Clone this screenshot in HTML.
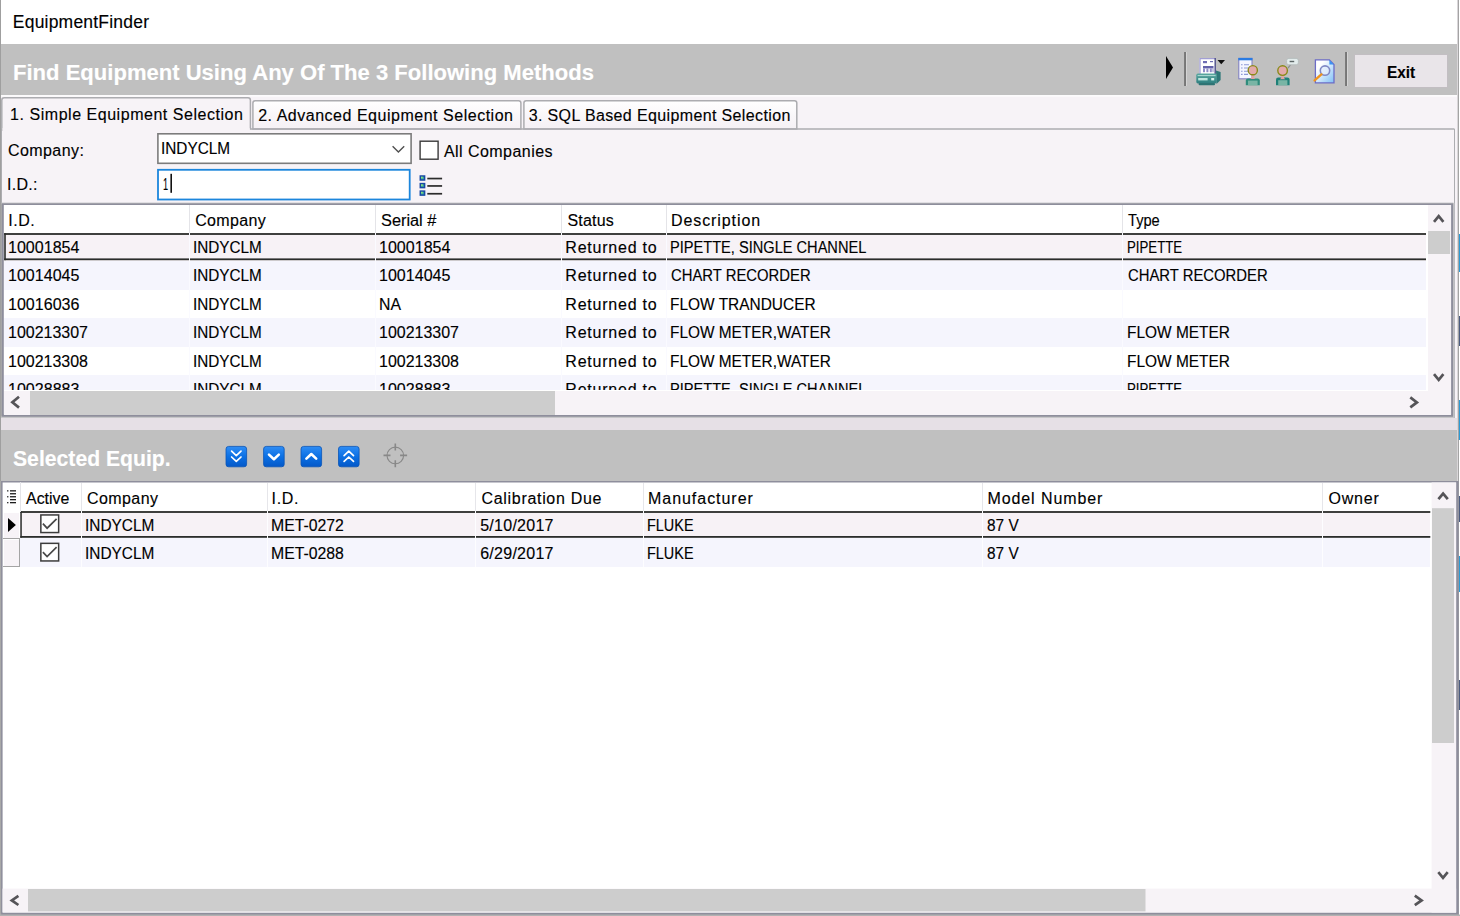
<!DOCTYPE html>
<html lang="en"><head><meta charset="utf-8"><title>EquipmentFinder</title>
<style>
html,body{margin:0;padding:0;}
body{width:1460px;height:916px;position:relative;overflow:hidden;background:#fff;font-family:"Liberation Sans",sans-serif;}
.b{position:absolute;box-sizing:border-box;}
.t{-webkit-text-stroke:0.14px currentColor;position:absolute;white-space:pre;line-height:normal;transform-origin:0 0;font-family:"Liberation Sans",sans-serif;color:#000;}
svg{position:absolute;overflow:visible;}

</style></head>
<body>
<!-- window edges -->
<div class="b" style="left:0;top:0;width:1px;height:916px;background:#9f9f9f"></div>
<div class="b" style="left:1457px;top:0;width:1px;height:916px;background:#d9d6d9"></div><div class="b" style="left:1458px;top:0;width:1px;height:916px;background:#a4a4a4"></div>
<div class="b" style="left:1459px;top:234px;width:1px;height:38px;background:#2a9bd6"></div><div class="b" style="left:1459px;top:316px;width:1px;height:30px;background:#4b5c80"></div><div class="b" style="left:1459px;top:400px;width:1px;height:40px;background:#2a9bd6"></div><div class="b" style="left:1459px;top:496px;width:1px;height:26px;background:#4b5c80"></div><div class="b" style="left:1459px;top:556px;width:1px;height:36px;background:#2a9bd6"></div><div class="b" style="left:1459px;top:680px;width:1px;height:30px;background:#4b5c80"></div>
<!-- top grey bar -->
<div class="b" style="left:1px;top:44px;width:1456px;height:51px;background:#c0c0c0"></div>
<!-- tab strip / page background -->
<div class="b" style="left:1px;top:95px;width:1456px;height:323px;background:#f7f3f7"></div>
<!-- tab page frame -->
<div class="b" style="left:1px;top:129px;width:1454px;height:289px;border:1px solid #adadb1;border-bottom:none;border-top:none;background:#f7f3f7"></div>
<!-- tabs -->
<svg style="left:0;top:90px" width="1460" height="45">
 <defs><linearGradient id="gtab" x1="0" y1="0" x2="0" y2="1"><stop offset="0" stop-color="#ffffff"/><stop offset="0.55" stop-color="#f9f6f9"/><stop offset="1" stop-color="#f5f1f5"/></linearGradient></defs>
 <rect x="1" y="5" width="1456" height="1.8" fill="#fcfbfc"/>
 <g fill="url(#gtab)" stroke="#acacb0" stroke-width="1.5">
  <path d="M252.9 39 V13 Q252.9 10.7 255.2 10.7 H518.6 Q520.9 10.7 520.9 13 V39 Z"/>
  <path d="M523.9 39 V13 Q523.9 10.7 526.2 10.7 H794.5 Q796.8 10.7 796.8 13 V39 Z"/>
 </g>
 <path d="M250 39 H1454.5" stroke="#acacb0" stroke-width="1.4" fill="none"/>
 <path d="M1.8 41 V10.2 Q1.8 7.8 4.2 7.8 H248 Q250.4 7.8 250.4 10.2 V39.6" fill="#f7f3f7" stroke="#acacb0" stroke-width="1.5"/>
 <rect x="2.6" y="38" width="247" height="4" fill="#f7f3f7"/>
</svg>
<!-- toolbar -->
<svg style="left:1166px;top:56px" width="8" height="23"><path d="M0 0 L7 11.5 L0 23 Z" fill="#000"/></svg>
<div class="b" style="left:1184px;top:52px;width:2px;height:34px;background:linear-gradient(90deg,#8a8a8a 0,#6c6c6c 50%,#808080 100%)"></div>
<div class="b" style="left:1186px;top:52px;width:1px;height:34px;background:#d4d4d4"></div>
<div class="b" style="left:1345px;top:52px;width:2px;height:34px;background:linear-gradient(90deg,#8a8a8a 0,#6c6c6c 50%,#808080 100%)"></div>
<div class="b" style="left:1347px;top:52px;width:1px;height:34px;background:#d4d4d4"></div>
<div class="b" style="left:1354px;top:54px;width:94px;height:34px;background:#e9e5e9;border:1px solid #c2bec2"></div>
<!-- combo / checkbox / id input / list icon -->
<svg style="left:0;top:130px" width="500" height="74">
 <rect x="157.9" y="3.8" width="253.2" height="29.5" fill="#fff" stroke="#7c7c7c" stroke-width="1.6"/>
 <path d="M392.6 16.2 L398.4 22 L404.2 16.2" fill="none" stroke="#505050" stroke-width="1.4"/>
 <rect x="420.1" y="11.2" width="18" height="18" fill="#fff" stroke="#3a3a3a" stroke-width="1.4"/>
 <rect x="158" y="39.8" width="251.7" height="29.7" fill="#fff" stroke="#1c86dc" stroke-width="1.8"/>
 <rect x="170.4" y="43.8" width="1.6" height="19" fill="#111"/>
 <g fill="#3fae9c" stroke="#1748a4" stroke-width="1.5"><rect x="420.3" y="46" width="4.3" height="4"/><rect x="420.3" y="53.6" width="4.3" height="4"/><rect x="420.3" y="61.1" width="4.3" height="4"/></g>
 <g fill="#8fe07a"><rect x="421" y="46.7" width="1.7" height="1.6"/><rect x="421" y="54.3" width="1.7" height="1.6"/><rect x="421" y="61.8" width="1.7" height="1.6"/></g>
 <g fill="#2c2c2c"><rect x="427.3" y="47.7" width="14.8" height="1.7"/><rect x="427.3" y="55.1" width="14.8" height="1.7"/><rect x="427.3" y="62.9" width="14.8" height="1.7"/></g>
</svg>
<!-- ===== top grid ===== -->
<svg style="left:0;top:0" width="1460" height="430">
 <rect x="1" y="202.8" width="1453.6" height="215.4" fill="#c6c6c8"/>
 <rect x="1" y="202.8" width="1452" height="213.6" fill="#b6b6bc"/>
 <rect x="1" y="203.6" width="1452" height="212.8" fill="#a9a9a9"/>
 <rect x="1.9" y="203.6" width="1451.2" height="213" fill="#8e8e9c"/>
 <rect x="3.8" y="205" width="1447.3" height="209.5" fill="#fff"/>
</svg>
<!-- rows -->
<div class="b" style="left:4px;top:233px;width:1422px;height:28px;background:#f7f2f6"></div>
<div class="b" style="left:4px;top:261px;width:1422px;height:29px;background:#f5f5fd"></div>
<div class="b" style="left:4px;top:318px;width:1422px;height:29px;background:#f5f5fd"></div>
<div class="b" style="left:4px;top:375px;width:1422px;height:14.5px;background:#f5f5fd"></div>
<!-- selected row outline -->
<svg style="left:0;top:0" width="1460" height="300"><g fill="#2b2d2b"><rect x="4.2" y="233.1" width="1421.8" height="1.8"/><rect x="4.2" y="258.4" width="1421.8" height="1.8"/><rect x="4.2" y="233.1" width="1.6" height="27.1"/></g></svg>
<!-- col separators -->
<div class="b" style="left:189px;top:205px;width:1px;height:28px;background:#e4e4e8"></div><div class="b" style="left:189px;top:233px;width:1px;height:157px;background:#fafaff"></div>
<div class="b" style="left:375px;top:205px;width:1px;height:28px;background:#e4e4e8"></div><div class="b" style="left:375px;top:233px;width:1px;height:157px;background:#fafaff"></div>
<div class="b" style="left:561px;top:205px;width:1px;height:28px;background:#e4e4e8"></div><div class="b" style="left:561px;top:233px;width:1px;height:157px;background:#fafaff"></div>
<div class="b" style="left:666px;top:205px;width:1px;height:28px;background:#e4e4e8"></div><div class="b" style="left:666px;top:233px;width:1px;height:157px;background:#fafaff"></div>
<div class="b" style="left:1122px;top:205px;width:1px;height:28px;background:#e4e4e8"></div><div class="b" style="left:1122px;top:233px;width:1px;height:157px;background:#fafaff"></div>
<!-- scrollbars -->
<div class="b" style="left:4px;top:389.5px;width:1424px;height:2px;background:#fff;z-index:3"></div>
<div class="b" style="left:4px;top:391px;width:1447px;height:23.5px;background:#f7f3f7;z-index:3"></div>
<div class="b" style="left:1428px;top:205px;width:23px;height:209.5px;background:#f7f3f7"></div>
<div class="b" style="left:30px;top:391px;width:525px;height:23.5px;background:#cdcdcd;z-index:4"></div>
<div class="b" style="left:1428px;top:231px;width:22px;height:23px;background:#cdcdcd"></div>
<!-- strip + second grey bar -->
<div class="b" style="left:1px;top:418px;width:1456px;height:12px;background:#e6e0e6"></div>
<div class="b" style="left:1px;top:430px;width:1456px;height:51px;background:#c0c0c0"></div>
<!-- ===== bottom grid ===== -->
<svg style="left:0;top:480px" width="1460" height="436">
 <rect x="0" y="1" width="1458.6" height="435" fill="#8e8e9c"/>
 <rect x="0" y="1" width="1.1" height="435" fill="#a8a8a8"/>
 <rect x="0" y="434.5" width="1460" height="1.5" fill="#b2b2b2"/>
 <rect x="2.6" y="2.5" width="1453.5" height="430" fill="#fff"/>
</svg>
<div class="b" style="left:20px;top:511px;width:1410px;height:27px;background:#f7f2f6"></div>
<div class="b" style="left:20px;top:538px;width:1410px;height:29px;background:#f5f5fd"></div>
<!-- row header cells -->
<div class="b" style="left:4px;top:513px;width:15px;height:25px;background:#f7f3f7"></div>
<div class="b" style="left:3px;top:538px;width:17px;height:1px;background:#a4a4a4"></div>
<div class="b" style="left:4px;top:540px;width:15px;height:26px;background:#f7f3f7"></div>
<div class="b" style="left:19px;top:538px;width:1px;height:29px;background:#a4a4a4"></div>
<div class="b" style="left:3px;top:566px;width:17px;height:1px;background:#a4a4a4"></div>
<svg style="left:8.3px;top:518px" width="9" height="15"><path d="M0 0 L7.9 7 L0 14 Z" fill="#000"/></svg>
<!-- selected outline -->
<svg style="left:0;top:480px" width="1460" height="100"><g fill="#2b2d2b"><rect x="20.3" y="31.1" width="1410" height="1.8"/><rect x="20.3" y="56" width="1410" height="1.8"/><rect x="20.3" y="31.1" width="1.5" height="26.7"/></g></svg>
<!-- col separators -->
<div class="b" style="left:20px;top:482px;width:1px;height:30px;background:#e4e4e8"></div>
<div class="b" style="left:81px;top:483px;width:1px;height:28px;background:#e6e6ea"></div><div class="b" style="left:81px;top:511px;width:1px;height:56px;background:#fdfdff"></div>
<div class="b" style="left:267px;top:483px;width:1px;height:28px;background:#e6e6ea"></div><div class="b" style="left:267px;top:511px;width:1px;height:56px;background:#fdfdff"></div>
<div class="b" style="left:475px;top:483px;width:1px;height:28px;background:#e6e6ea"></div><div class="b" style="left:475px;top:511px;width:1px;height:56px;background:#fdfdff"></div>
<div class="b" style="left:643px;top:483px;width:1px;height:28px;background:#e6e6ea"></div><div class="b" style="left:643px;top:511px;width:1px;height:56px;background:#fdfdff"></div>
<div class="b" style="left:982px;top:483px;width:1px;height:28px;background:#e6e6ea"></div><div class="b" style="left:982px;top:511px;width:1px;height:56px;background:#fdfdff"></div>
<div class="b" style="left:1322px;top:483px;width:1px;height:28px;background:#e6e6ea"></div><div class="b" style="left:1322px;top:511px;width:1px;height:56px;background:#fdfdff"></div>
<!-- header menu glyph -->
<svg style="left:0;top:480px" width="30" height="30"><g fill="#1c1c1c"><rect x="10" y="10.2" width="6" height="1.3"/><rect x="10" y="13.1" width="6" height="1.3"/><rect x="10" y="16.1" width="6" height="1.3"/><rect x="10" y="19" width="6" height="1.3"/><rect x="10" y="22" width="6" height="1.3"/><rect x="7.1" y="10.2" width="1.3" height="1.3"/><rect x="7.1" y="16.1" width="1.3" height="1.3"/><rect x="7.1" y="22" width="1.3" height="1.3"/></g></svg>
<!-- checkboxes -->
<svg style="left:40px;top:514px" width="20" height="50"><g fill="#fff" stroke="#3c3c3c" stroke-width="1.5"><rect x="0.85" y="0.95" width="17.8" height="17.6"/><rect x="0.85" y="29.35" width="17.8" height="17.6"/></g><g fill="none" stroke="#484848" stroke-width="1.7"><path d="M2.9 9.7 L7.1 14.2 L16.6 4.8"/><path d="M2.9 38.1 L7.1 42.6 L16.6 33.2"/></g></svg>
<!-- scrollbars -->
<svg style="left:0;top:480px" width="1460" height="436"><rect x="1431.6" y="2.5" width="24.5" height="430" fill="#f7f3f7"/><rect x="2.6" y="408.6" width="1453.5" height="23.9" fill="#f7f3f7"/><rect x="1432" y="28.2" width="22" height="234.8" fill="#cdcdcd"/><rect x="28" y="409" width="1117.5" height="22.4" fill="#cdcdcd"/></svg>
<svg style="left:0;top:0;z-index:5" width="1460" height="916">
 <g fill="none" stroke="#555458" stroke-width="2.7" stroke-linejoin="miter">
  <path d="M19 396.8 L12.4 402.2 L19 407.6"/>
  <path d="M1410.3 397.4 L1416.9 402.4 L1410.3 407.4"/>
  <path d="M1434 221.8 L1438.7 216.2 L1443.4 221.8"/>
  <path d="M1434 374.2 L1438.7 379.8 L1443.4 374.2"/>
  <path d="M18.4 895.8 L11.8 900.4 L18.4 905"/>
  <path d="M1414.8 895.6 L1421.6 900.4 L1414.8 905.2"/>
  <path d="M1438.4 499.2 L1443.1 493.6 L1447.8 499.2"/>
  <path d="M1438.3 872.2 L1443 877.8 L1447.7 872.2"/>
 </g>
</svg>
<!-- ===== toolbar icons ===== -->
<svg style="left:0;top:0;z-index:6" width="1460" height="100">
 <defs>
  <linearGradient id="gdoc" x1="0" y1="0" x2="1" y2="1"><stop offset="0.25" stop-color="#ffffff"/><stop offset="1" stop-color="#7fc0f6"/></linearGradient>
  <linearGradient id="gteal" x1="0" y1="0" x2="0" y2="1"><stop offset="0" stop-color="#5aa8a0"/><stop offset="1" stop-color="#2f7f80"/></linearGradient>
 </defs>
 <!-- printer -->
 <g>
  <rect x="1199.4" y="58" width="16.4" height="16" fill="#fff"/>
  <path d="M1200 74V58.6H1215" fill="none" stroke="#a29fd4" stroke-width="1.3"/>
  <path d="M1215.2 58V74" fill="none" stroke="#4a4a86" stroke-width="1.4"/>
  <rect x="1203" y="61" width="4" height="2.2" fill="#6f6db4"/><rect x="1210" y="61" width="3" height="1.2" fill="#6f6db4"/>
  <rect x="1203" y="66" width="10.5" height="2.4" fill="#6361aa"/>
  <rect x="1203" y="68.4" width="2" height="3.8" fill="#8f8dc8"/><rect x="1206.4" y="68.4" width="2" height="3.8" fill="#8f8dc8"/><rect x="1209.8" y="68.4" width="2" height="3.8" fill="#8f8dc8"/><rect x="1212.5" y="68.4" width="1" height="3.8" fill="#8f8dc8"/>
  <path d="M1216 70.5 L1220.6 72 L1220.6 80 L1216.5 84 Z" fill="#2f7878"/>
  <rect x="1196.3" y="73.6" width="20.4" height="9.8" rx="1.6" fill="url(#gteal)"/>
  <rect x="1198.6" y="83" width="16.4" height="2.2" rx="1" fill="#2f7474"/>
  <rect x="1197.6" y="75" width="18" height="1.1" fill="#a8d6cf"/>
  <rect x="1198.2" y="78" width="9.4" height="2.4" fill="#bfe6df"/><rect x="1211.2" y="78" width="3" height="2.4" fill="#d6f2ec"/>
  <path d="M1217.5 59.9 H1225 L1221.25 64.2 Z" fill="#111"/>
 </g>
 <!-- list + person -->
 <g>
  <rect x="1238.8" y="58.4" width="13.2" height="20.4" fill="#f4f6ff" stroke="#7d7dc0" stroke-width="1"/>
  <rect x="1238.3" y="57.9" width="14.2" height="2.4" fill="#2a7be2"/>
  <g stroke="#8c9ad6" stroke-width="1.1"><path d="M1241 64.8h1.6M1244 64.8h5M1241 68h1.6M1244 68h5M1241 71.2h1.6M1244 71.2h4M1241 74.4h1.6M1244 74.4h4"/></g>
  <path d="M1245.8 85.2 V80.4 Q1245.8 78.4 1248 78.4 H1257.6 Q1259.8 78.4 1259.8 80.4 V85.2 Z" fill="#2f8c7c"/>
  <path d="M1248 85.2 V80.6 H1257.6 V85.2 Z" fill="#79b5a5"/>
  <path d="M1251.4 74.5 h2.8 v3.6 l1.2 1 h-5.2 l1.2 -1 Z" fill="#e0a4a4"/>
  <circle cx="1252.8" cy="70.2" r="4.6" fill="#e3aaaa" stroke="#8a8a18" stroke-width="1.4"/>
 </g>
 <!-- person + bubble -->
 <g>
  <path d="M1276 85.2 V79.4 Q1276 77.4 1278.2 77.4 H1287.4 Q1289.6 77.4 1289.6 79.4 V85.2 Z" fill="#1f8078"/>
  <path d="M1278.2 85.2 V80.2 H1287.4 V85.2 Z" fill="#79b5a5"/>
  <path d="M1281.2 75 h2.8 v3 l1.4 1.2 h-5.6 l1.4 -1.2 Z" fill="#e0a4a4"/>
  <circle cx="1282.6" cy="70.6" r="4.8" fill="#e3aaaa" stroke="#8a8a18" stroke-width="1.4"/>
  <path d="M1288 68.2 L1290.6 64.6" stroke="#8a9090" stroke-width="1.2"/>
  <rect x="1286.6" y="58.4" width="11.8" height="6.4" rx="2.2" fill="#e3ecec" stroke="#b4bcbc" stroke-width="0.9"/>
  <rect x="1289.6" y="60.8" width="4.6" height="1.4" fill="#5c6666"/>
 </g>
 <!-- doc + magnifier -->
 <g>
  <path d="M1315.4 59.9 H1329.4 L1334 64.6 V82.9 H1315.4 Z" fill="url(#gdoc)" stroke="#6c6cc6" stroke-width="1.3"/>
  <path d="M1329.4 59.9 L1334 64.6 H1329.4 Z" fill="#3c92f2"/>
  <circle cx="1325" cy="70.6" r="4.7" fill="#e4eefc" fill-opacity="0.8" stroke="#8088c4" stroke-width="1.6"/>
  <path d="M1321.4 74.4 L1314.6 80.4" stroke="#f0941e" stroke-width="2.4" stroke-linecap="round"/>
 </g>
</svg>
<!-- blue arrow buttons + crosshair -->
<svg style="left:0;top:430px;z-index:6" width="1460" height="51">
 <defs><linearGradient id="gb" x1="0" y1="0" x2="0" y2="1"><stop offset="0" stop-color="#2f8df5"/><stop offset="0.5" stop-color="#0b70e4"/><stop offset="1" stop-color="#0458c8"/></linearGradient></defs>
 <g fill="url(#gb)" stroke="#0a55b8" stroke-width="0.8">
  <rect x="226" y="16.4" width="20.6" height="20.4" rx="2.6"/><rect x="263.6" y="16.4" width="20.6" height="20.4" rx="2.6"/>
  <rect x="301" y="16.4" width="20.6" height="20.4" rx="2.6"/><rect x="338.5" y="16.4" width="20.6" height="20.4" rx="2.6"/>
 </g>
 <g fill="none" stroke="#fff" stroke-width="2" stroke-linecap="round" stroke-linejoin="round">
  <path d="M231.6 21.2 L236.3 25.6 L241 21.2 M231.6 27 L236.3 31.4 L241 27" stroke-width="1.7"/>
  <path d="M269 24.6 L273.9 29.2 L278.8 24.6" stroke-width="2.6"/>
  <path d="M306.4 28.6 L311.3 24 L316.2 28.6" stroke-width="2.6"/>
  <path d="M344.1 25.6 L348.8 21.2 L353.5 25.6 M344.1 31.4 L348.8 27 L353.5 31.4" stroke-width="1.7"/>
 </g>
 <g fill="none" stroke="#888" stroke-width="1.1">
  <circle cx="395.3" cy="25.4" r="8.3"/>
  <path d="M395.3 13.6 V20.6 M395.3 30.2 V37.2 M383.5 25.4 H390.5 M400.1 25.4 H407.1" stroke-width="1.6"/>
 </g>
</svg>

<span class="t" style="left:12.80px;top:12.00px;font-size:17.5px;transform:scaleX(1.0000);letter-spacing:0.212px;">EquipmentFinder</span>
<span class="t" style="left:13.00px;top:60.00px;font-size:22px;transform:scaleX(1.0021);font-weight:700;color:#fff;">Find Equipment Using Any Of The 3 Following Methods</span>
<span class="t" style="left:1387.10px;top:63.00px;font-size:17px;transform:scaleX(0.9044);font-weight:700;">Exit</span>
<span class="t" style="left:10.10px;top:106.00px;font-size:16px;transform:scaleX(1.0000);letter-spacing:0.532px;">1. Simple Equipment Selection</span>
<span class="t" style="left:258.20px;top:107.00px;font-size:16px;transform:scaleX(1.0000);letter-spacing:0.518px;">2. Advanced Equipment Selection</span>
<span class="t" style="left:528.70px;top:107.00px;font-size:16px;transform:scaleX(1.0000);letter-spacing:0.367px;">3. SQL Based Equipment Selection</span>
<span class="t" style="left:8.00px;top:142.00px;font-size:16px;transform:scaleX(1.0000);letter-spacing:0.418px;">Company:</span>
<span class="t" style="left:161.24px;top:140.00px;font-size:16px;transform:scaleX(0.9593);">INDYCLM</span>
<span class="t" style="left:444.00px;top:143.00px;font-size:16px;transform:scaleX(1.0000);letter-spacing:0.445px;">All Companies</span>
<span class="t" style="left:7.00px;top:176.00px;font-size:16px;transform:scaleX(1.0000);letter-spacing:0.277px;">I.D.:</span>
<span class="t" style="left:163.03px;top:176.00px;font-size:16px;transform:scaleX(0.5750);">1</span>
<span class="t" style="left:12.90px;top:446.00px;font-size:22px;transform:scaleX(0.9625);font-weight:700;color:#fff;">Selected Equip.</span>
<span class="t" style="left:8.30px;top:212.00px;font-size:16px;transform:scaleX(1.0000);letter-spacing:0.485px;">I.D.</span>
<span class="t" style="left:195.20px;top:212.00px;font-size:16px;transform:scaleX(1.0000);letter-spacing:0.354px;">Company</span>
<span class="t" style="left:381.20px;top:212.00px;font-size:16px;transform:scaleX(1.0193);">Serial #</span>
<span class="t" style="left:567.40px;top:212.00px;font-size:16px;transform:scaleX(1.0000);letter-spacing:0.208px;">Status</span>
<span class="t" style="left:671.00px;top:212.00px;font-size:16px;transform:scaleX(1.0000);letter-spacing:0.907px;">Description</span>
<span class="t" style="left:1128.00px;top:212.00px;font-size:16px;transform:scaleX(0.9141);">Type</span>
<span class="t" style="left:7.50px;top:239.00px;font-size:16px;transform:scaleX(1.0030);">10001854</span>
<span class="t" style="left:193.04px;top:239.00px;font-size:16px;transform:scaleX(0.9550);">INDYCLM</span>
<span class="t" style="left:379.20px;top:239.00px;font-size:16px;transform:scaleX(1.0030);">10001854</span>
<span class="t" style="left:565.30px;top:239.00px;font-size:16px;transform:scaleX(1.0000);letter-spacing:0.779px;">Returned to</span>
<span class="t" style="left:670.09px;top:239.00px;font-size:16px;transform:scaleX(0.9124);">PIPETTE, SINGLE CHANNEL</span>
<span class="t" style="left:1126.77px;top:239.00px;font-size:16px;transform:scaleX(0.8276);">PIPETTE</span>
<span class="t" style="left:7.50px;top:267.00px;font-size:16px;transform:scaleX(1.0030);">10014045</span>
<span class="t" style="left:193.04px;top:267.00px;font-size:16px;transform:scaleX(0.9550);">INDYCLM</span>
<span class="t" style="left:379.20px;top:267.00px;font-size:16px;transform:scaleX(1.0030);">10014045</span>
<span class="t" style="left:565.30px;top:267.00px;font-size:16px;transform:scaleX(1.0000);letter-spacing:0.779px;">Returned to</span>
<span class="t" style="left:671.00px;top:267.00px;font-size:16px;transform:scaleX(0.9276);">CHART RECORDER</span>
<span class="t" style="left:1127.60px;top:267.00px;font-size:16px;transform:scaleX(0.9276);">CHART RECORDER</span>
<span class="t" style="left:7.50px;top:296.00px;font-size:16px;transform:scaleX(1.0030);">10016036</span>
<span class="t" style="left:193.04px;top:296.00px;font-size:16px;transform:scaleX(0.9550);">INDYCLM</span>
<span class="t" style="left:379.01px;top:296.00px;font-size:16px;transform:scaleX(0.9882);">NA</span>
<span class="t" style="left:565.30px;top:296.00px;font-size:16px;transform:scaleX(1.0000);letter-spacing:0.779px;">Returned to</span>
<span class="t" style="left:670.03px;top:296.00px;font-size:16px;transform:scaleX(0.9655);">FLOW TRANDUCER</span>
<span class="t" style="left:7.50px;top:324.00px;font-size:16px;transform:scaleX(0.9976);">100213307</span>
<span class="t" style="left:193.04px;top:324.00px;font-size:16px;transform:scaleX(0.9550);">INDYCLM</span>
<span class="t" style="left:379.20px;top:324.00px;font-size:16px;transform:scaleX(0.9976);">100213307</span>
<span class="t" style="left:565.30px;top:324.00px;font-size:16px;transform:scaleX(1.0000);letter-spacing:0.779px;">Returned to</span>
<span class="t" style="left:670.04px;top:324.00px;font-size:16px;transform:scaleX(0.9623);">FLOW METER,WATER</span>
<span class="t" style="left:1126.63px;top:324.00px;font-size:16px;transform:scaleX(0.9657);">FLOW METER</span>
<span class="t" style="left:7.50px;top:353.00px;font-size:16px;transform:scaleX(0.9976);">100213308</span>
<span class="t" style="left:193.04px;top:353.00px;font-size:16px;transform:scaleX(0.9550);">INDYCLM</span>
<span class="t" style="left:379.20px;top:353.00px;font-size:16px;transform:scaleX(0.9976);">100213308</span>
<span class="t" style="left:565.30px;top:353.00px;font-size:16px;transform:scaleX(1.0000);letter-spacing:0.779px;">Returned to</span>
<span class="t" style="left:670.04px;top:353.00px;font-size:16px;transform:scaleX(0.9623);">FLOW METER,WATER</span>
<span class="t" style="left:1126.63px;top:353.00px;font-size:16px;transform:scaleX(0.9657);">FLOW METER</span>
<span class="t" style="left:7.50px;top:381.00px;font-size:16px;transform:scaleX(1.0030);">10028883</span>
<span class="t" style="left:193.04px;top:381.00px;font-size:16px;transform:scaleX(0.9550);">INDYCLM</span>
<span class="t" style="left:379.20px;top:381.00px;font-size:16px;transform:scaleX(1.0030);">10028883</span>
<span class="t" style="left:565.30px;top:381.00px;font-size:16px;transform:scaleX(1.0000);letter-spacing:0.779px;">Returned to</span>
<span class="t" style="left:670.09px;top:381.00px;font-size:16px;transform:scaleX(0.9124);">PIPETTE, SINGLE CHANNEL</span>
<span class="t" style="left:1126.77px;top:381.00px;font-size:16px;transform:scaleX(0.8276);">PIPETTE</span>
<span class="t" style="left:25.50px;top:490.00px;font-size:16px;transform:scaleX(0.9961);">Active</span>
<span class="t" style="left:87.00px;top:490.00px;font-size:16px;transform:scaleX(1.0000);letter-spacing:0.421px;">Company</span>
<span class="t" style="left:271.50px;top:490.00px;font-size:16px;transform:scaleX(1.0000);letter-spacing:0.685px;">I.D.</span>
<span class="t" style="left:481.50px;top:490.00px;font-size:16px;transform:scaleX(1.0000);letter-spacing:0.687px;">Calibration Due</span>
<span class="t" style="left:648.00px;top:490.00px;font-size:16px;transform:scaleX(1.0000);letter-spacing:0.960px;">Manufacturer</span>
<span class="t" style="left:987.50px;top:490.00px;font-size:16px;transform:scaleX(1.0000);letter-spacing:0.900px;">Model Number</span>
<span class="t" style="left:1328.50px;top:490.00px;font-size:16px;transform:scaleX(1.0000);letter-spacing:0.801px;">Owner</span>
<span class="t" style="left:84.54px;top:517.00px;font-size:16px;transform:scaleX(0.9621);">INDYCLM</span>
<span class="t" style="left:271.01px;top:517.00px;font-size:16px;transform:scaleX(0.9875);">MET-0272</span>
<span class="t" style="left:480.20px;top:517.00px;font-size:16px;transform:scaleX(1.0000);letter-spacing:0.265px;">5/10/2017</span>
<span class="t" style="left:647.10px;top:517.00px;font-size:16px;transform:scaleX(0.9018);">FLUKE</span>
<span class="t" style="left:987.00px;top:517.00px;font-size:16px;transform:scaleX(0.9626);">87 V</span>
<span class="t" style="left:84.54px;top:545.00px;font-size:16px;transform:scaleX(0.9621);">INDYCLM</span>
<span class="t" style="left:271.01px;top:545.00px;font-size:16px;transform:scaleX(0.9875);">MET-0288</span>
<span class="t" style="left:480.20px;top:545.00px;font-size:16px;transform:scaleX(1.0000);letter-spacing:0.265px;">6/29/2017</span>
<span class="t" style="left:647.10px;top:545.00px;font-size:16px;transform:scaleX(0.9018);">FLUKE</span>
<span class="t" style="left:987.00px;top:545.00px;font-size:16px;transform:scaleX(0.9626);">87 V</span>
</body></html>
